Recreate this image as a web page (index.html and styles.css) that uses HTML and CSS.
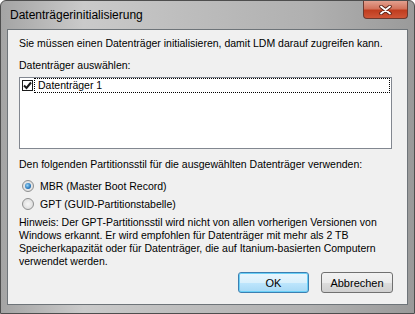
FILE: index.html
```html
<!DOCTYPE html>
<html lang="de">
<head>
    <meta charset="UTF-8">
    <title>Datenträgerinitialisierung</title>
    <link rel="stylesheet" href="styles.css">
</head>
<body>
    <div class="window">
        <div class="titlebar">
            <span class="title">Datenträgerinitialisierung</span>
            <div class="close">
                <svg width="13" height="10" viewBox="0 0 13 10">
                    <path d="M2 1.5 L11 8.5 M11 1.5 L2 8.5" stroke="#5a2418" stroke-width="3.6" stroke-linecap="round"/>
                    <path d="M2 1.5 L11 8.5 M11 1.5 L2 8.5" stroke="#ffffff" stroke-width="1.8" stroke-linecap="round"/>
                </svg>
            </div>
        </div>
        <div class="client">
            <p class="intro">Sie müssen einen Datenträger initialisieren, damit LDM darauf zugreifen kann.</p>
            <p class="label">Datenträger auswählen:</p>
            <div class="listbox">
                <div class="list-item">
                    <span class="check">
                        <svg width="9" height="9" viewBox="0 0 9 9">
                            <path d="M1 4.5 L3.5 7 L8 1.5" stroke="#1a1a1a" stroke-width="2" fill="none"/>
                        </svg>
                    </span>
                    <span class="item-text">Datenträger 1</span>
                </div>
            </div>
            <p class="label style-label">Den folgenden Partitionsstil für die ausgewählten Datenträger verwenden:</p>
            <div class="radio-group">
                <div class="radio-row">
                    <span class="radio checked"></span>
                    <span>MBR (Master Boot Record)</span>
                </div>
                <div class="radio-row">
                    <span class="radio"></span>
                    <span>GPT (GUID-Partitionstabelle)</span>
                </div>
            </div>
            <p class="note">Hinweis: Der GPT-Partitionsstil wird nicht von allen vorherigen Versionen von<br>Windows erkannt. Er wird empfohlen für Datenträger mit mehr als 2 TB<br>Speicherkapazität oder für Datenträger, die auf Itanium-basierten Computern<br>verwendet werden.</p>
            <div class="buttons">
                <button class="btn default">OK</button>
                <button class="btn">Abbrechen</button>
            </div>
        </div>
    </div>
</body>
</html>
```

FILE: styles.css
```css
body {
    margin: 0;
    font-family: 'Liberation Sans', Arial, sans-serif;
    background: #ffffff;
}

.window {
    width: 415px;
    height: 314px;
    box-sizing: border-box;
    background: linear-gradient(90deg, #a4a4a4 0%, #cacaca 20%, #bdbdbd 45%, #b0b0b0 75%, #9a9a9a 100%);
    border: 1px solid #4e4e4e;
    border-radius: 6px 6px 0 0;
    display: flex;
    flex-direction: column;
    overflow: hidden;
}

.titlebar {
    height: 28px;
    display: flex;
    justify-content: space-between;
    align-items: flex-start;
}

.title {
    font-size: 12px;
    color: #000;
    margin: 7px 0 0 9px;
}

.close {
    width: 45px;
    height: 18px;
    margin-right: 6px;
    box-sizing: border-box;
    background: linear-gradient(#e3a08f 0%, #d3735c 45%, #c03d1f 55%, #cf5537 100%);
    border: 1px solid #6b3a30;
    border-top: none;
    border-radius: 0 0 4px 4px;
    display: flex;
    align-items: center;
    justify-content: center;
}

.client {
    flex: 1;
    margin: 0 6px 8px 6px;
    background: #f0f0f0;
    border: 1px solid #6e7479;
    padding: 7px 10px 0 11px;
    font-size: 10.5px;
    line-height: 13px;
    color: #000;
}

p {
    margin: 0;
}

.intro {
    white-space: nowrap;
}

.label {
    margin-top: 9px;
}

.listbox {
    margin-top: 5px;
    width: 373px;
    height: 72px;
    box-sizing: border-box;
    background: #fff;
    border: 1px solid #828790;
    padding: 0 1px 0 2px;
}

.list-item {
    display: flex;
    align-items: center;
    height: 15px;
}

.check {
    width: 11px;
    height: 11px;
    box-sizing: border-box;
    border: 1px solid #1c1c1c;
    background: #fff;
    display: flex;
    align-items: center;
    justify-content: center;
}

.item-text {
    flex: 1;
    height: 15px;
    box-sizing: border-box;
    border: 1px dotted #000;
    margin-left: 1px;
    padding-left: 3px;
    line-height: 13px;
}

.style-label {
    margin-top: 9px;
}

.radio-group {
    margin-top: 6px;
}

.radio-row {
    display: flex;
    align-items: center;
    gap: 6px;
    height: 18px;
    padding-left: 3px;
}

.radio {
    width: 12px;
    height: 12px;
    box-sizing: border-box;
    border-radius: 50%;
    border: 1px solid #8e8f8f;
    background: radial-gradient(circle, #f6f6f6 0%, #d6d6d6 100%);
    position: relative;
}

.radio.checked::after {
    content: '';
    position: absolute;
    left: 2px;
    top: 2px;
    width: 6px;
    height: 6px;
    border-radius: 50%;
    background: radial-gradient(circle at 40% 40%, #9bd6f6 0%, #2a78bb 60%, #174f8a 100%);
}

.note {
    margin-top: 3px;
}

.buttons {
    display: flex;
    justify-content: flex-end;
    gap: 12px;
    margin-top: 4px;
    padding-right: 4px;
}

.btn {
    width: 72px;
    height: 21px;
    font-family: 'Liberation Sans', Arial, sans-serif;
    font-size: 11px;
    color: #000;
    border: 1px solid #707070;
    border-radius: 3px;
    background: linear-gradient(#f2f2f2 0%, #ebebeb 50%, #dddddd 51%, #cfcfcf 100%);
    padding: 0;
}

.btn.default {
    width: 71px;
    border-color: #3c7fb1;
    background: linear-gradient(#eaf6fd 0%, #d9f0fc 50%, #bee6fd 51%, #a7d9f5 100%);
    box-shadow: inset 0 0 0 1px #6bd0f7;
}
```
